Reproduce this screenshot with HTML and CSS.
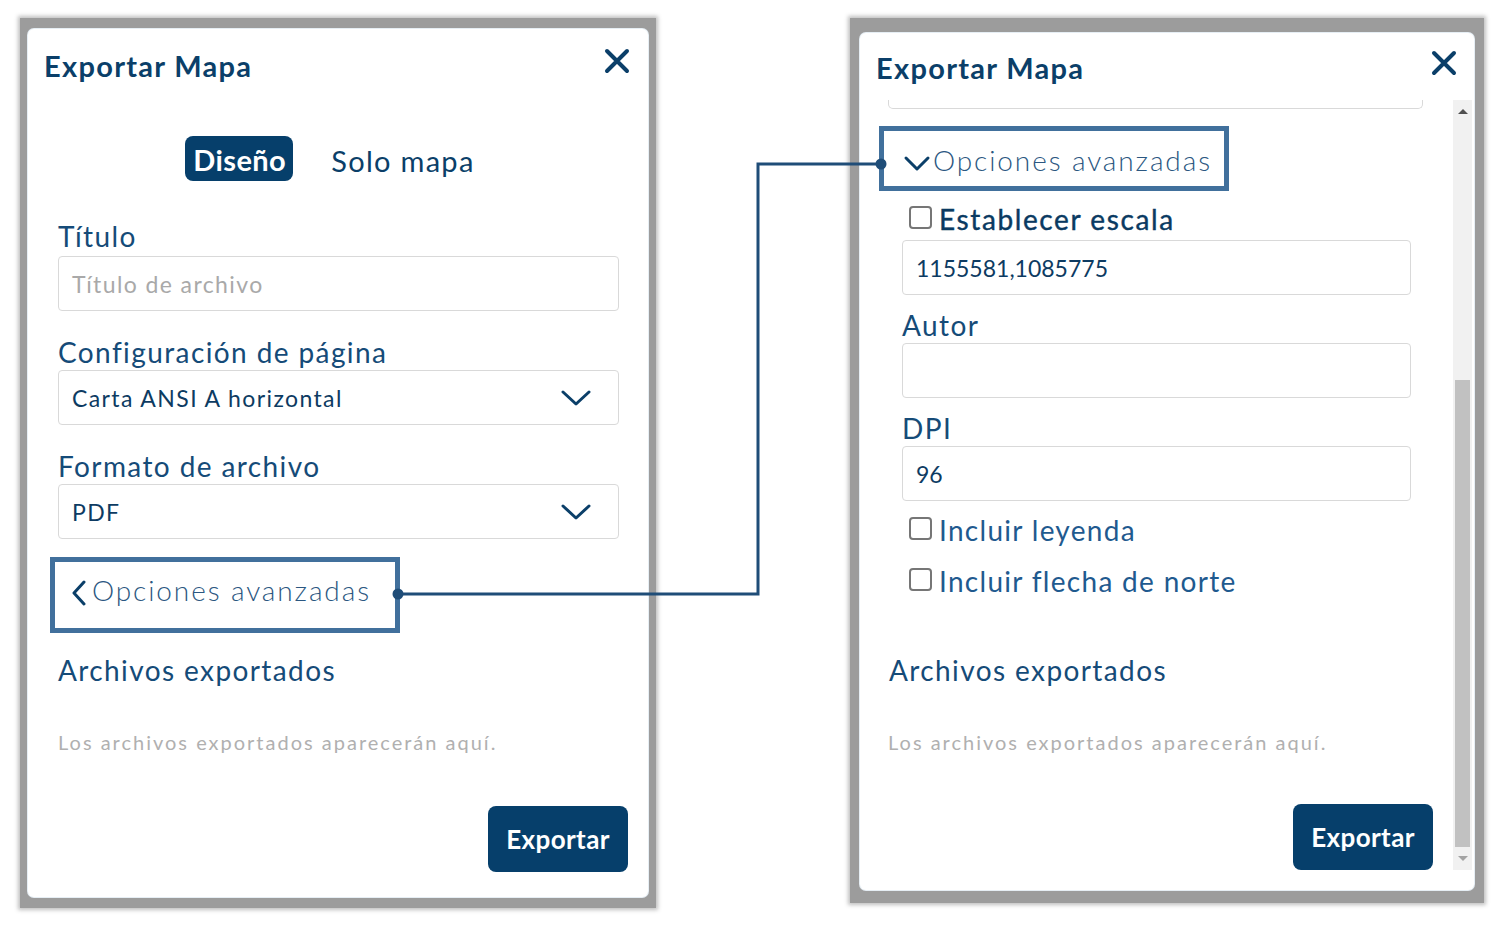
FILE: index.html
```html
<!DOCTYPE html>
<html lang="es">
<head>
    <meta charset="UTF-8">
    <title>Exportar Mapa</title>
    <link rel="stylesheet" href="styles.css">
</head>
<body>
    <div class="stage">
        <!-- panel colapsado -->
        <div class="frame frame-left">
            <div class="card">
                <div class="card-head">
                    <h2 class="card-title">Exportar Mapa</h2>
                    <svg class="close" width="26" height="26" viewBox="0 0 26 26"><path d="M3 3L23 23M23 3L3 23" stroke="#0b3f69" stroke-width="4" stroke-linecap="round"/></svg>
                </div>
                <div class="tabs">
                    <span class="tab active">Diseño</span>
                    <span class="tab">Solo mapa</span>
                </div>
                <div class="form">
                    <label class="label first">Título</label>
                    <div class="input placeholder">Título de archivo</div>
                    <label class="label">Configuración de página</label>
                    <div class="input select">Carta ANSI A horizontal
                        <svg width="30" height="18" viewBox="0 0 30 18"><path d="M2 3L15 15L28 3" fill="none" stroke="#0b3f69" stroke-width="3" stroke-linecap="round" stroke-linejoin="round"/></svg>
                    </div>
                    <label class="label">Formato de archivo</label>
                    <div class="input select">PDF
                        <svg width="30" height="18" viewBox="0 0 30 18"><path d="M2 3L15 15L28 3" fill="none" stroke="#0b3f69" stroke-width="3" stroke-linecap="round" stroke-linejoin="round"/></svg>
                    </div>
                    <div class="callout callout-left">
                        <svg width="16" height="26" viewBox="0 0 16 26"><path d="M13 2L3 13L13 24" fill="none" stroke="#0b3f69" stroke-width="3" stroke-linecap="round" stroke-linejoin="round"/></svg>
                        <span class="adv">Opciones avanzadas</span>
                    </div>
                    <h3 class="section">Archivos exportados</h3>
                    <p class="note">Los archivos exportados aparecerán aquí.</p>
                </div>
                <div class="actions">
                    <button class="btn">Exportar</button>
                </div>
            </div>
        </div>

        <!-- panel expandido -->
        <div class="frame frame-right">
            <div class="card">
                <div class="card-head">
                    <h2 class="card-title">Exportar Mapa</h2>
                    <svg class="close" width="26" height="26" viewBox="0 0 26 26"><path d="M3 3L23 23M23 3L3 23" stroke="#0b3f69" stroke-width="4" stroke-linecap="round"/></svg>
                </div>
                <div class="scroll">
                    <div class="scroll-body">
                        <div class="cut-input"></div>
                        <div class="callout callout-right">
                            <svg width="28" height="18" viewBox="0 0 28 18"><path d="M3 4L14 15L25 4" fill="none" stroke="#0b3f69" stroke-width="3" stroke-linecap="round" stroke-linejoin="round"/></svg>
                            <span class="adv">Opciones avanzadas</span>
                        </div>
                        <div class="advanced">
                            <div class="check strong"><span class="box"></span>Establecer escala</div>
                            <div class="input value">1155581,1085775</div>
                            <label class="label tight">Autor</label>
                            <div class="input"></div>
                            <label class="label tight">DPI</label>
                            <div class="input value">96</div>
                            <div class="check light c1"><span class="box"></span>Incluir leyenda</div>
                            <div class="check light c2"><span class="box"></span>Incluir flecha de norte</div>
                        </div>
                        <h3 class="section section-right">Archivos exportados</h3>
                        <p class="note">Los archivos exportados aparecerán aquí.</p>
                        <div class="actions actions-right">
                            <button class="btn">Exportar</button>
                        </div>
                    </div>
                    <div class="scrollbar">
                        <span class="arrow up"></span>
                        <span class="track-gap"></span>
                        <span class="thumb"></span>
                        <span class="arrow down"></span>
                    </div>
                </div>
            </div>
        </div>

        <svg class="connector" width="1499" height="931" viewBox="0 0 1499 931">
            <path d="M398 594H758V164H880" fill="none" stroke="#1f4d78" stroke-width="3"/>
            <circle cx="398" cy="594" r="5.5" fill="#1f4d78"/>
            <circle cx="881" cy="164" r="5.5" fill="#1f4d78"/>
        </svg>
    </div>
</body>
</html>
```

FILE: styles.css
```css
/* Exportar mapa - comparación */
body {
    margin: 0;
    background: #ffffff;
    font-family: 'Lato', 'Open Sans', sans-serif;
    color: #0b3f69;
}

.stage {
    position: relative;
    width: 1499px;
    height: 931px;
    display: flex;
    align-items: flex-start;
    gap: 194px;
    padding: 18px 0 0 20px;
    box-sizing: border-box;
}

.frame {
    background: #9c9c9c;
    box-shadow: 0 0 4px 2px rgba(0, 0, 0, 0.25);
}

.frame-left {
    padding: 11px 8px 11px 8px;
}

.frame-right {
    padding: 15px 10px 13px 10px;
}

.card {
    background: #ffffff;
    border-radius: 6px;
    box-shadow: 0 0 0 1px #e6eef4;
    display: flex;
    flex-direction: column;
}

.frame-left .card {
    width: 620px;
    height: 868px;
}

.frame-right .card {
    width: 614px;
    height: 857px;
}

.card-head {
    display: flex;
    justify-content: space-between;
    align-items: flex-start;
    padding: 20px 18px 0 16px;
}

.frame-right .card-head {
    padding: 18px 17px 0 16px;
}

.card-title {
    margin: 0;
    font-size: 29px;
    line-height: 34px;
    font-weight: 700;
    letter-spacing: 1.3px;
    color: #0b3f69;
}

.close {
    margin-top: -1px;
}

.tabs {
    display: flex;
    justify-content: center;
    align-items: flex-start;
    gap: 38px;
    height: 45px;
    margin: 53px 16px 0 0;
}

.tab {
    font-size: 29px;
    line-height: 45px;
    letter-spacing: 1.3px;
    color: #0b3f69;
    padding-top: 2px;
}

.tab.active {
    background: #063f6b;
    color: #ffffff;
    font-weight: 700;
    letter-spacing: 0.4px;
    border-radius: 8px;
    padding: 3px 7px 0 8px;
    height: 45px;
    box-sizing: border-box;
    line-height: 42px;
}

.form {
    padding: 0 29px 0 30px;
    display: flex;
    flex-direction: column;
}

.label {
    font-size: 28px;
    line-height: 34px;
    letter-spacing: 1.4px;
    color: #154b78;
    margin-top: 24px;
    margin-bottom: 1px;
}

.label.first {
    margin-top: 38px;
    margin-bottom: 3px;
}

.input {
    height: 55px;
    box-sizing: border-box;
    border: 1px solid #d9d9d9;
    border-radius: 4px;
    padding: 0 14px 0 13px;
    display: flex;
    align-items: center;
    font-size: 23px;
    letter-spacing: 1.4px;
    color: #0d3b62;
}

.placeholder {
    color: #a9a9a9;
}

.select {
    justify-content: space-between;
    padding-right: 27px;
}

.callout {
    border: 5px solid #41709c;
    display: flex;
    align-items: center;
    box-sizing: border-box;
}

.callout-left {
    width: 350px;
    height: 76px;
    margin: 18px 0 0 -8px;
    padding: 0 0 10px 16px;
    gap: 5px;
}

.callout-left svg {
    margin-top: 6px;
}

.adv {
    font-size: 28px;
    font-weight: 300;
    letter-spacing: 1.9px;
    color: #2b5781;
}

.section {
    margin: 20px 0 0;
    font-size: 28px;
    line-height: 34px;
    font-weight: 400;
    letter-spacing: 1.4px;
    color: #154b78;
}

.note {
    margin: 41px 0 0;
    font-size: 20px;
    line-height: 28px;
    letter-spacing: 2px;
    color: #b0b0b0;
}

.actions {
    display: flex;
    justify-content: flex-end;
    padding-right: 20px;
    margin-top: 50px;
}

.btn {
    width: 140px;
    height: 66px;
    border: none;
    border-radius: 8px;
    background: #063f6b;
    color: #ffffff;
    font-family: inherit;
    font-size: 26px;
    font-weight: 700;
    letter-spacing: 0.4px;
}

/* panel derecho */
.scroll {
    display: flex;
    margin-top: 15px;
    height: 770px;
}

.scroll-body {
    width: 535px;
    padding-left: 28px;
    display: flex;
    flex-direction: column;
}

.cut-input {
    height: 9px;
    border: 1px solid #d9d9d9;
    border-top: none;
    border-radius: 0 0 5px 5px;
}

.callout-right {
    width: 350px;
    height: 76px;
    margin: 17px 0 0 -9px;
    padding: 3px 0 0 19px;
    gap: 2px;
}

.callout-right svg {
    margin-top: 6px;
}

.advanced {
    display: flex;
    flex-direction: column;
    padding: 0 12px 0 14px;
}

.check {
    display: flex;
    align-items: center;
    font-size: 28px;
    line-height: 34px;
    letter-spacing: 1.3px;
    padding-left: 7px;
    gap: 7px;
}

.check.strong {
    margin: 11px 0 4px;
    color: #0a3a62;
    letter-spacing: 1.6px;
    -webkit-text-stroke: 0.4px #0a3a62;
}

.check.light {
    color: #1f5a8f;
}

.c1 {
    margin-top: 12px;
}

.c2 {
    margin-top: 17px;
}

.box {
    width: 19px;
    height: 19px;
    border: 2px solid #767676;
    border-radius: 4px;
    margin-top: -4px;
}

.value {
    color: #0d3b62;
    letter-spacing: 0;
}

.label.tight {
    margin-top: 13px;
    margin-bottom: 1px;
}

.section-right {
    margin: 55px 0 0 1px;
}

.actions-right {
    padding-right: 0;
    margin-top: 48px;
    margin-right: -10px;
}

.scrollbar {
    width: 19px;
    margin-left: 30px;
    background: #f1f1f1;
    display: flex;
    flex-direction: column;
    align-items: center;
}

.arrow {
    width: 0;
    height: 0;
    border-left: 5px solid transparent;
    border-right: 5px solid transparent;
    margin: 9px 0;
}

.arrow.up {
    border-bottom: 5px solid #505050;
}

.arrow.down {
    border-top: 5px solid #a3a3a3;
}

.track-gap {
    height: 257px;
}

.thumb {
    width: 15px;
    flex: 1;
    background: #c1c1c1;
}

.connector {
    position: absolute;
    left: 0;
    top: 0;
    pointer-events: none;
}
```
